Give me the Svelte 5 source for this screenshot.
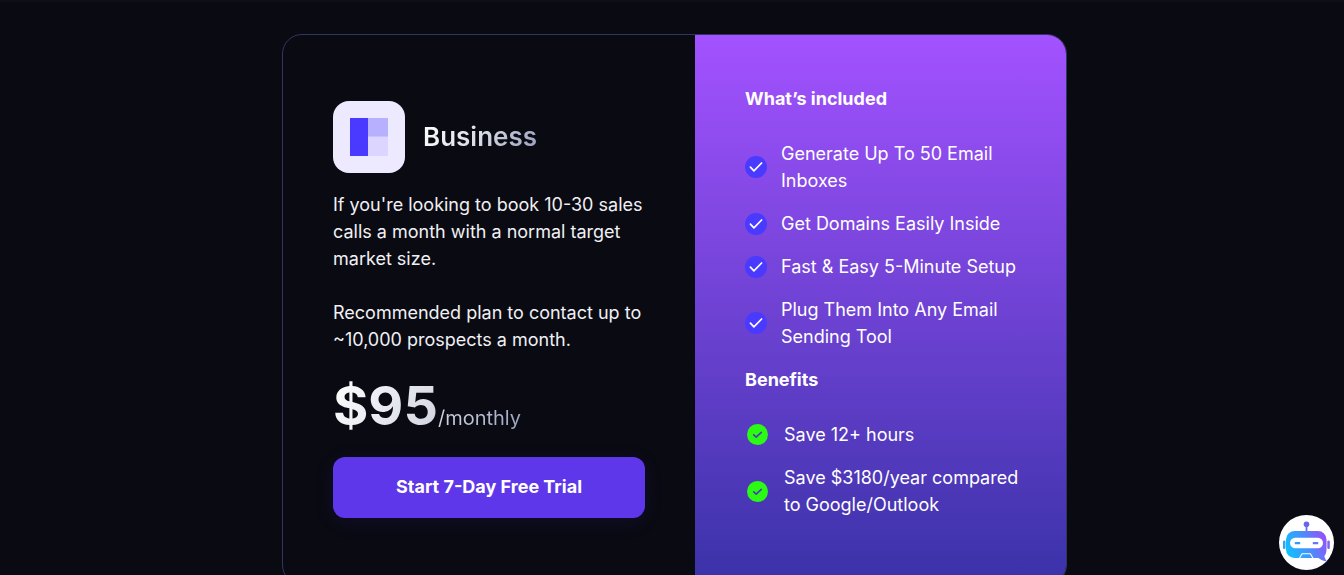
<script>
  const included = [
    'Generate Up To 50 Email Inboxes',
    'Get Domains Easily Inside',
    'Fast & Easy 5-Minute Setup',
    'Plug Them Into Any Email Sending Tool'
  ];
  const benefits = ['Save 12+ hours', 'Save $3180/year compared to Google/Outlook'];
</script>

<main class="page">
  <article class="card">
    <section class="plan">
      <header class="plan-head">
        <svg class="plan-icon" viewBox="0 0 72 72" aria-hidden="true">
          <rect width="72" height="72" rx="16" fill="#edeaff" />
          <rect x="35" y="17" width="20" height="38" fill="#dbd5ff" />
          <rect x="35" y="17" width="20" height="18.500" fill="#b7b0ff" />
          <rect x="17" y="17" width="18" height="38" fill="#4a3aff" />
        </svg>
        <h2 class="plan-name">Business</h2>
      </header>
      <p class="copy">If you're looking to book 10-30 sales calls a month with a normal target market size.</p>
      <p class="copy">Recommended plan to contact up to ~10,000 prospects a month.</p>
      <p class="price">$95<span class="period">/monthly</span></p>
      <button class="cta" type="button">Start 7-Day Free Trial</button>
    </section>

    <section class="features">
      <h3>What’s included</h3>
      <ul>
        {#each included as item}
          <li>
            <svg width="22" height="22" viewBox="0 0 22 22" aria-hidden="true">
              <circle cx="11" cy="11" r="11" fill="#4a3aff" />
              <path d="M5.4 11.2 8.900 14.800 16.600 7" fill="none" stroke="#fff" stroke-width="1.700" stroke-linecap="round" stroke-linejoin="round" />
            </svg>
            <span>{item}</span>
          </li>
        {/each}
      </ul>
      <h3>Benefits</h3>
      <ul>
        {#each benefits as item}
          <li>
            <svg width="25" height="25" viewBox="0 0 25 25" aria-hidden="true">
              <circle cx="12.5" cy="12.5" r="10.5" fill="#2bfa13" />
              <path d="M8.700 12.800 11.200 15.200 16.300 10.300" fill="none" stroke="#5039bd" stroke-width="1.600" stroke-linecap="round" stroke-linejoin="round" />
            </svg>
            <span>{item}</span>
          </li>
        {/each}
      </ul>
    </section>
  </article>

  <button class="chat" type="button" aria-label="Open chat">
    <svg width="55" height="55" viewBox="0 0 55 55" aria-hidden="true">
      <defs>
        <linearGradient id="bot" x1="7" y1="38" x2="46" y2="20" gradientUnits="userSpaceOnUse">
          <stop offset="0" stop-color="#0cc4ff" />
          <stop offset="0.5" stop-color="#4592fb" />
          <stop offset="1" stop-color="#9650fa" />
        </linearGradient>
      </defs>
      <circle cx="27.5" cy="27.5" r="27.5" fill="#fff" />
      <path d="M27.500 10v7" stroke="#5f70f5" stroke-width="1.800" />
      <circle cx="27.500" cy="9.300" r="2.800" fill="#6d62ea" />
      <rect x="4" y="25.500" width="2.500" height="8.400" rx="1.200" fill="#2ba6f4" />
      <rect x="48.300" y="25.500" width="2.500" height="8.400" rx="1.200" fill="#8062ee" />
      <path d="M15 16h24a8.500 8.500 0 0 1 8.500 8.500v10c0 2.800-.8 5-2.100 6.600.3 2.100 1.100 3.600 2.600 5.400-3.600-.3-6.400-1.600-8.400-3.500H15.500A8.500 8.500 0 0 1 7 34.500v-10A8.500 8.500 0 0 1 15 16z" fill="url(#bot)" />
      <path d="M20.400 43.200 23 38.700h8.400l2.600 4.500" fill="none" stroke="#fff" stroke-width="1.100" stroke-linejoin="round" />
      <rect x="11" y="22.800" width="33" height="10.400" rx="5.200" fill="#fff" />
      <rect x="15.800" y="26.900" width="5.400" height="2.400" rx="0.500" fill="#2a9ff8" />
      <rect x="33.800" y="26.900" width="5.400" height="2.400" rx="0.500" fill="#6674f6" />
    </svg>
  </button>
</main>

<style>
  :global(body) {
    background: #0a0a12;
  }

  .page {
    box-sizing: border-box;
    min-height: 100vh;
    padding: 34px 16px 0 21px;
    background: linear-gradient(#11111b, #0a0a12 3px);
    color: #fff;
    font-family: Inter, sans-serif;
    font-size: 18px;
    line-height: 27px;
  }

  .card {
    display: grid;
    grid-template-columns: 412fr 371fr;
    box-sizing: border-box;
    max-width: 785px;
    margin: 0 auto;
    overflow: hidden;
    border: 1px solid #313564;
    border-radius: 20px;
  }

  .plan {
    display: flex;
    flex-direction: column;
    justify-content: center;
    padding: 50px;
  }

  .plan-head {
    display: flex;
    align-items: center;
    gap: 18px;
    margin-bottom: 18px;
  }

  .plan-icon {
    width: 72px;
    height: 72px;
  }

  h2,
  h3,
  p,
  ul {
    margin: 0;
  }

  .plan-name,
  .price {
    background: linear-gradient(120deg, #fff, #d9dce6 50%, #949dba);
    background-clip: text;
    color: transparent;
  }

  .plan-name {
    font-size: 26px;
    font-weight: 600;
    line-height: 36px;
  }

  .copy {
    color: #f0f0f4;
  }

  .copy + .copy {
    margin-top: 27px;
  }

  .price {
    align-self: flex-start;
    margin: 20px 0 6px;
    font-size: 54px;
    font-weight: 700;
    line-height: 66px;
  }

  .period {
    font-size: 20px;
    font-weight: 400;
  }

  .cta {
    padding: 16px 24px 18px;
    border: 0;
    border-radius: 12px;
    background: #5f37eb;
    box-shadow: 0 4px 20px rgb(74 58 255 / 10%);
    color: #fff;
    font: inherit;
    font-weight: 700;
    cursor: pointer;
  }

  .features {
    padding: 50px 44px 50px 50px;
    background: linear-gradient(#a352ff, #3a32a8);
  }

  h3 {
    margin-bottom: 28px;
    font-size: 18px;
    font-weight: 700;
  }

  ul {
    padding: 0;
    list-style: none;
  }

  li {
    display: flex;
    align-items: center;
    gap: 14px;
    margin-bottom: 16px;
  }

  li svg {
    flex: none;
  }

  .chat {
    position: fixed;
    right: 10px;
    bottom: 5px;
    display: flex;
    padding: 0;
    border: 0;
    border-radius: 50%;
    background: none;
    cursor: pointer;
  }
</style>
